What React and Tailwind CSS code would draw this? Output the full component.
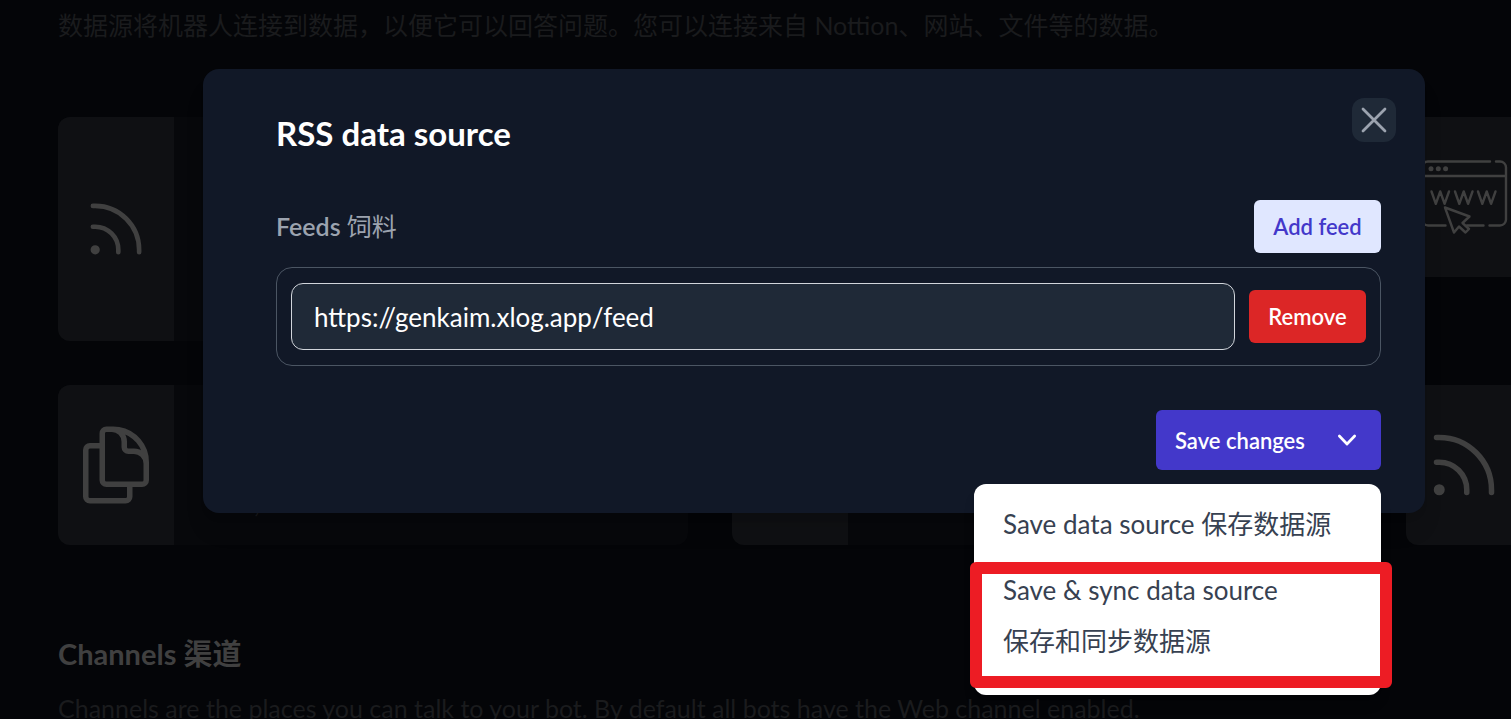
import React from "react";

function RssIcon({ className }) {
  return (
    <svg className={className} viewBox="0 0 24 24" fill="none" stroke="currentColor" strokeWidth="1.5" strokeLinecap="round" strokeLinejoin="round" aria-hidden="true">
      <path d="M12.75 19.5v-.75a7.5 7.5 0 0 0-7.5-7.5H4.5m0-6.75h.75c7.87 0 14.25 6.38 14.25 14.25v.75M6 18.75a.75.75 0 1 1-1.5 0 .75.75 0 0 1 1.5 0Z" />
    </svg>
  );
}

function FilesIcon({ className }) {
  return (
    <svg className={className} viewBox="0 0 24 24" fill="none" stroke="currentColor" strokeWidth="1.5" strokeLinecap="round" strokeLinejoin="round" aria-hidden="true">
      <path d="M15.75 17.25v3.375c0 .621-.504 1.125-1.125 1.125h-9.75a1.125 1.125 0 0 1-1.125-1.125V7.875c0-.621.504-1.125 1.125-1.125H8.25m7.5 10.5h3.375c.621 0 1.125-.504 1.125-1.125V11.25c0-4.46-3.243-8.161-7.5-8.876a9.06 9.06 0 0 0-1.5-.124H9.375c-.621 0-1.125.504-1.125 1.125v3.5m7.5 10.375H9.375a1.125 1.125 0 0 1-1.125-1.125v-9.25m12 6.625v-1.875a3.375 3.375 0 0 0-3.375-3.375h-1.5a1.125 1.125 0 0 1-1.125-1.125v-1.5a3.375 3.375 0 0 0-3.375-3.375H9.75" />
    </svg>
  );
}

function WebIcon({ className }) {
  return (
    <svg className={className} viewBox="0 0 88 88" fill="none" stroke="currentColor" strokeWidth="2.4" strokeLinecap="round" strokeLinejoin="round" aria-hidden="true">
      <path d="M70 8.500H8a6 6 0 0 0-6 6V66.500a6 6 0 0 0 6 6H25.500M76 8.500h4a6 6 0 0 1 6 6V66.500a6 6 0 0 1-6 6H69.500M47 72.500H63.500M2 23H86" />
      <path d="M11.500 38.500l4.300 12.300 4.400-12.300 4.400 12.300 4.400-12.300M35 38.500l4.300 12.300 4.400-12.300 4.400 12.300 4.400-12.300M58 38.500l4.300 12.300 4.400-12.300 4.400 12.300 4.400-12.300" />
      <path d="M25 54.500l24.500 9-7 6.500 6.500 6-3.500 3.500-6.500-6-5 6Z" />
      <g fill="currentColor" stroke="none">
        <circle cx="11" cy="15.700" r="2.500" />
        <circle cx="18.300" cy="15.700" r="2.500" />
        <circle cx="25.600" cy="15.700" r="2.500" />
      </g>
    </svg>
  );
}

function SourceCard({ icon, tall, children }) {
  return (
    <article className={`flex overflow-hidden rounded-xl bg-[#07080b] ${tall ? "h-56" : "h-40"}`}>
      <div className="flex w-[116px] shrink-0 items-center justify-center bg-[#0f1013] text-[#404040]">{icon}</div>
      <div className="flex flex-1 items-end px-20 pb-7 text-[25px] leading-7 text-[#1b1c1f]">{children}</div>
    </article>
  );
}

function Background() {
  return (
    <main className="h-full overflow-hidden pl-[58px] text-[25px] text-[#1a1b1d]">
      <p className="whitespace-nowrap pt-[2px] leading-[46px]">
        数据源将机器人连接到数据，以便它可以回答问题。您可以连接来自 Nottion、网站、文件等的数据。
      </p>
      <section className="mt-[69px] grid auto-cols-[630px] grid-flow-col grid-rows-[224px_160px] items-start gap-11">
        <SourceCard tall icon={<RssIcon className="size-[74px]" />} />
        <SourceCard icon={<FilesIcon className="size-[88px]" />}>,</SourceCard>
        <SourceCard tall />
        <SourceCard />
        <SourceCard icon={<WebIcon className="size-[88px]" />} />
        <SourceCard icon={<RssIcon className="size-[88px]" />} />
      </section>
      <h2 className="mt-[86px] text-[29px] font-bold leading-[46px] text-[#404040]">Channels 渠道</h2>
      <p className="mt-2 whitespace-nowrap leading-[46px]">
        Channels are the places you can talk to your bot. By default all bots have the Web channel enabled.
      </p>
    </main>
  );
}

function SaveMenu() {
  return (
    <div className="absolute right-0 top-full mt-[14px] w-[407px] rounded-xl bg-white pb-7 pt-[15px] text-[26px] leading-[51px] text-[#374151] shadow-lg">
      <button type="button" className="block w-full px-[29px] text-left">Save data source 保存数据源</button>
      <button type="button" className="mt-[15px] block w-full px-[29px] text-left">
        Save &amp; sync data source
        <br />
        保存和同步数据源
      </button>
      <div className="pointer-events-none absolute -left-1 -right-[11px] bottom-[7px] top-[78px] rounded-md border-12 border-[#ed1c24]" />
    </div>
  );
}

function RssDialog() {
  return (
    <div role="dialog" aria-labelledby="dialog-title" className="relative w-full rounded-2xl bg-[#111827] pb-[43px] pl-[73px] pr-11 pt-[41px] shadow-xl">
      <button type="button" aria-label="Close" className="absolute right-[29px] top-[29px] size-11 rounded-xl bg-[#1f2937] text-[#9ca3af]">
        <svg className="size-11" viewBox="0 0 24 24" fill="none" stroke="currentColor" strokeWidth="1.5" strokeLinecap="round" aria-hidden="true">
          <path d="M6 18 18 6M6 6l12 12" />
        </svg>
      </button>
      <h1 id="dialog-title" className="text-[33px] font-bold leading-[46px] text-white">RSS data source</h1>
      <div className="mt-11 flex items-center justify-between">
        <label htmlFor="feed-url" className="text-[25px] font-semibold text-[#9ca3af]">
          Feeds <span className="font-normal">饲料</span>
        </label>
        <button type="button" className="h-[53px] w-[127px] rounded-md bg-[#e0e7ff] text-[22px] font-semibold text-[#4338ca]">Add feed</button>
      </div>
      <div className="mt-[14px] flex items-center gap-[14px] rounded-2xl border border-[#4b5563] px-[14px] py-[15px]">
        <input id="feed-url" type="text" defaultValue="https://genkaim.xlog.app/feed" className="h-[67px] min-w-0 flex-1 rounded-xl border border-[#d1d5db] bg-[#1f2937] px-[22px] text-[26px] text-white outline-none" />
        <button type="button" className="h-[53px] w-[117px] rounded-md bg-[#dc2626] text-[22px] font-semibold text-white">Remove</button>
      </div>
      <div className="mt-11 flex justify-end">
        <div className="relative">
          <button type="button" aria-expanded="true" className="flex h-[60px] w-[225px] items-center justify-between rounded-md bg-[#4338ca] pl-[19px] pr-4 text-[22px] font-semibold text-white">
            Save changes
            <svg className="size-9" viewBox="0 0 20 20" fill="currentColor" aria-hidden="true">
              <path fillRule="evenodd" d="M5.230 7.210a.75.75 0 0 1 1.060.020L10 11.168l3.710-3.938a.75.75 0 1 1 1.080 1.040l-4.250 4.500a.75.75 0 0 1-1.080 0l-4.250-4.500a.75.75 0 0 1 .020-1.060Z" clipRule="evenodd" />
            </svg>
          </button>
          <SaveMenu />
        </div>
      </div>
    </div>
  );
}

export default function App() {
  return (
    <div className="relative h-screen overflow-hidden bg-[#040508] font-['Lato','Noto_Sans_CJK_SC',sans-serif]">
      <Background />
      <div className="absolute inset-0 pl-[203px] pr-[86px] pt-[69px]">
        <RssDialog />
      </div>
    </div>
  );
}
